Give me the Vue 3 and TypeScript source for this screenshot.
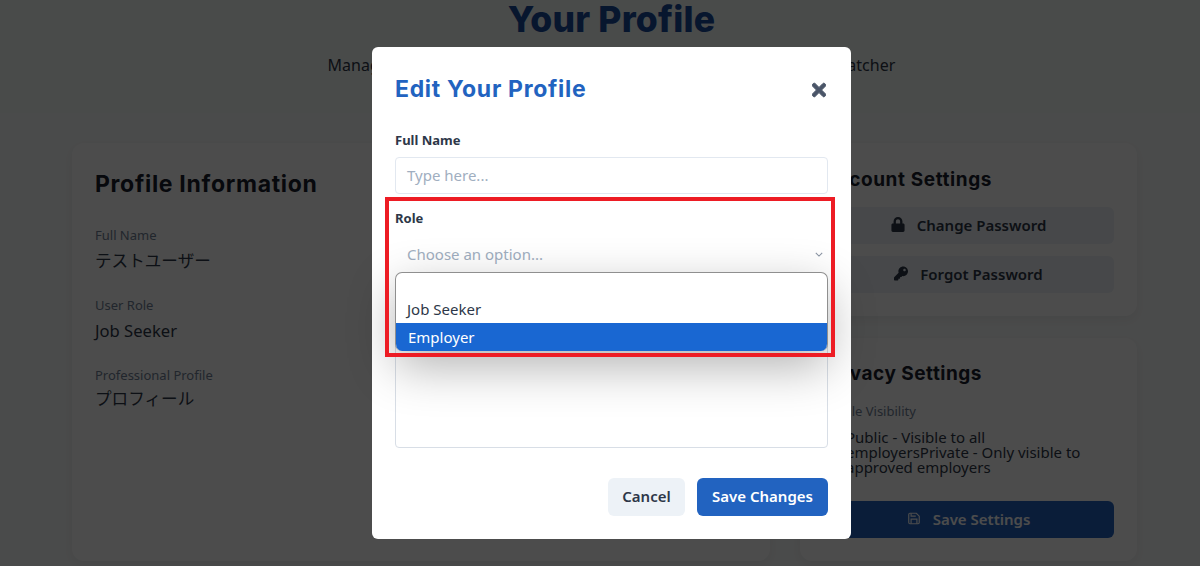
<script setup lang="ts">
interface Field { label: string; value: string }
const fields: Field[] = [
  { label: 'Full Name', value: 'テストユーザー' },
  { label: 'User Role', value: 'Job Seeker' },
  { label: 'Professional Profile', value: 'プロフィール' },
]
</script>

<template>
  <div class="page">
    <header class="hero">
      <h1>Your Profile</h1>
      <p>Manage your professional information and account settings on JobMatcher</p>
    </header>
    <main class="content">
      <section class="card info">
        <h2 class="big">Profile Information</h2>
        <div v-for="f in fields" :key="f.label" class="field">
          <div class="flabel">{{ f.label }}</div>
          <div class="fvalue">{{ f.value }}</div>
        </div>
      </section>
      <aside class="side">
        <section class="card account">
          <h2>Account Settings</h2>
          <button class="ghost">
            <svg class="ic" viewBox="0 0 448 512"><path d="M400 224h-24v-72C376 68.2 307.8 0 224 0S72 68.2 72 152v72H48c-26.5 0-48 21.5-48 48v192c0 26.5 21.5 48 48 48h352c26.5 0 48-21.5 48-48V272c0-26.5-21.5-48-48-48zm-104 0H152v-72c0-39.7 32.3-72 72-72s72 32.3 72 72v72z"/></svg>
            Change Password
          </button>
          <button class="ghost">
            <svg class="ic" viewBox="0 0 512 512"><path d="M512 176.001C512 273.203 433.202 352 336 352c-11.22 0-22.19-1.062-32.827-3.069l-24.012 27.014A23.999 23.999 0 0 1 261.223 384H224v40c0 13.255-10.745 24-24 24h-40v40c0 13.255-10.745 24-24 24H24c-13.255 0-24-10.745-24-24v-78.059c0-6.365 2.529-12.47 7.029-16.971l161.802-161.802C163.108 213.814 160 195.271 160 176 160 78.798 238.797.001 335.999 0 433.488-.001 512 78.511 512 176.001zM336 128c0 26.51 21.49 48 48 48s48-21.49 48-48-21.49-48-48-48-48 21.49-48 48z"/></svg>
            Forgot Password
          </button>
        </section>
        <section class="card privacy">
          <h2>Privacy Settings</h2>
          <div class="flabel">Profile Visibility</div>
          <p class="radios">Public - Visible to all employersPrivate - Only visible to approved employers</p>
          <button class="solid">
            <svg class="ic light" viewBox="0 0 24 24" fill="none" stroke="currentColor" stroke-width="2"><path d="M19 21H5a2 2 0 0 1-2-2V5a2 2 0 0 1 2-2h11l5 5v11a2 2 0 0 1-2 2z"/><path d="M17 21v-8H7v8M7 3v5h8"/></svg>
            Save Settings
          </button>
        </section>
      </aside>
    </main>

    <div class="overlay">
      <div class="modal">
        <div class="mhead">
          <h3>Edit Your Profile</h3>
          <svg class="close" viewBox="0 0 352 512"><path d="M242.72 256l100.07-100.07c12.28-12.28 12.28-32.19 0-44.48l-22.24-22.24c-12.28-12.28-32.19-12.28-44.48 0L176 189.28 75.93 89.21c-12.28-12.28-32.19-12.28-44.48 0L9.21 111.45c-12.28 12.28-12.28 32.19 0 44.48L109.28 256 9.21 356.07c-12.28 12.28-12.28 32.19 0 44.48l22.24 22.24c12.28 12.28 32.2 12.28 44.48 0L176 322.72l100.07 100.07c12.28 12.28 32.2 12.28 44.48 0l22.24-22.24c12.28-12.28 12.28-32.19 0-44.48L242.72 256z"/></svg>
        </div>
        <label class="mlabel first">Full Name</label>
        <div class="input">Type here...</div>
        <label class="mlabel role">Role</label>
        <div class="select">
          <span>Choose an option...</span>
          <svg class="chev" viewBox="0 0 10 6" fill="none" stroke="currentColor" stroke-width="1.3"><path d="M1 1l4 4 4-4"/></svg>
        </div>
        <div class="textarea"></div>
        <div class="actions">
          <button class="cancel">Cancel</button>
          <button class="save">Save Changes</button>
        </div>
        <div class="popup">
          <div class="opt empty"></div>
          <div class="opt">Job Seeker</div>
          <div class="opt sel">Employer</div>
        </div>
        <div class="mark"></div>
      </div>
    </div>
  </div>
</template>

<style>
html, body { margin: 0; overflow: hidden; }
</style>

<style scoped>
.page {
  position: relative;
  width: 1200px;
  height: 566px;
  overflow: hidden;
  background: #f9fbfb;
  font-family: "Noto Sans", "Noto Sans CJK JP", sans-serif;
  color: #2d3748;
}
.hero {
  height: 113px;
  box-sizing: border-box;
  padding: 1px 0 0 23px;
  text-align: center;
  background: #f6fbf9;
}
.hero h1 {
  margin: 0;
  font: 800 35.5px/38px Inter, sans-serif;
  letter-spacing: 0.2px;
  color: #1a4a9c;
}
.hero p { margin: 16px 0 0; font-size: 16px; line-height: 20px; letter-spacing: 0.05px; }
.content {
  display: grid;
  grid-template-columns: 698px 337px;
  gap: 30px;
  padding: 30px 63px 0 72px;
}
.card {
  box-sizing: border-box;
  background: #fff;
  border-radius: 12px;
  padding: 23px;
  box-shadow: 0 4px 12px rgba(0, 0, 0, 0.06);
}
.info { height: 418px; }
.side { display: flex; flex-direction: column; gap: 22px; }
.account { height: 173px; padding-top: 24px; }
.privacy { height: 223px; padding-top: 24px; }
h2 {
  margin: 0 0 16px;
  font: 700 19px/24px Inter, sans-serif;
  letter-spacing: 0.6px;
  color: #1a202c;
}
.account h2 { position: relative; top: 1px; }
.privacy h2 { letter-spacing: 0.5px; }
h2.big { font-size: 23px; line-height: 28px; letter-spacing: 0.7px; margin: 4px 0 28px; }
.field { margin-bottom: 22px; }
.flabel { font-size: 13px; line-height: 18px; color: #718096; }
.fvalue { font-size: 16.6px; line-height: 26px; margin-top: 4px; }
.field:last-child .fvalue { margin-top: 2px; }
.ghost, .solid {
  width: 100%;
  height: 37px;
  border: 0;
  border-radius: 6px;
  padding: 0 0 2px;
  display: flex;
  align-items: center;
  justify-content: center;
  gap: 12px;
  font: 600 15px "Noto Sans", sans-serif;
  color: #2d3748;
  background: #edf2f7;
}
.ghost + .ghost { margin-top: 12px; }
.solid { background: #2263c0; color: #fff; margin-top: 26px; }
.ic { width: 14px; height: 15px; fill: currentColor; }
.ic.light { fill: none; }
.radios {
  margin: 10px 0 0;
  padding: 0 16px 0 23px;
  font-size: 15px;
  line-height: 15px;
}
.overlay {
  position: absolute;
  inset: 0;
  background: rgba(0, 0, 0, 0.7);
}
.modal {
  position: absolute;
  left: 372px;
  top: 47px;
  width: 479px;
  height: 492px;
  box-sizing: border-box;
  padding: 23px;
  background: #fff;
  border-radius: 6px;
  display: flex;
  flex-direction: column;
}
.mhead { display: flex; justify-content: space-between; align-items: center; height: 36px; }
.mhead h3 {
  margin: 1px 0 0;
  font: 700 23px/36px Inter, sans-serif;
  letter-spacing: 0.7px;
  color: #2263c0;
}
.close { width: 14px; height: 20px; fill: #4a5568; stroke: #4a5568; stroke-width: 24; margin: 3px 2px 0 0; }
.mlabel { font-size: 13px; font-weight: 700; line-height: 18px; }
.first { margin-top: 25px; }
.input {
  box-sizing: border-box;
  height: 37px;
  margin-top: 8px;
  padding: 0 11px;
  border: 1px solid #e2e8f0;
  border-radius: 4px;
  font-size: 15px;
  line-height: 34px;
  color: #a0aec0;
}
.role { margin-top: 15px; }
.select {
  height: 36px;
  margin-top: 9px;
  padding: 0 5px 0 12px;
  display: flex;
  align-items: center;
  justify-content: space-between;
  font-size: 15px;
  color: #a0aec0;
}
.chev { width: 8px; height: 5px; color: #8a94a3; }
.textarea {
  box-sizing: border-box;
  height: 136px;
  margin-top: 40px;
  border: 1px solid #d8dee6;
  border-radius: 4px;
}
.actions { display: flex; justify-content: flex-end; gap: 12px; margin-top: 30px; }
.cancel, .save {
  height: 38px;
  border: 0;
  border-radius: 6px;
  padding: 0 0 2px;
  font: 600 15px "Noto Sans", sans-serif;
}
.cancel { width: 77px; background: #edf2f7; color: #2d3748; }
.save { width: 131px; background: #2263c0; color: #fff; }
.popup {
  position: absolute;
  left: 23px;
  top: 225px;
  width: 433px;
  height: 79px;
  box-sizing: border-box;
  background: #fff;
  border: 1px solid #8f8f8f;
  border-bottom: 0;
  border-radius: 7px;
  overflow: hidden;
  box-shadow: 0 16px 48px rgba(0, 0, 0, 0.3);
  font-size: 15px;
}
.opt { height: 28px; padding-left: 11px; line-height: 28px; color: #2d3748; }
.opt.empty { height: 22px; }
.opt.sel { background: #1967d2; color: #fff; padding-left: 12px; }
.mark {
  position: absolute;
  left: 13px;
  top: 150px;
  width: 450px;
  height: 160px;
  box-sizing: border-box;
  border: 4px solid #ed1c24;
}
</style>
